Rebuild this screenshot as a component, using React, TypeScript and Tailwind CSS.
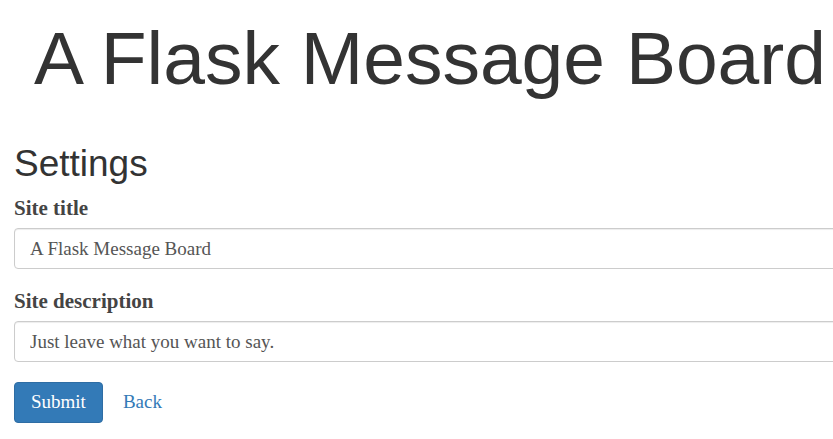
import { type FC } from 'react';

const serif = "font-['Liberation_Serif',Georgia,serif]";

type FieldProps = {
  label: string;
  value: string;
  className?: string;
};

const Field: FC<FieldProps> = ({ label, value, className }) => (
  <div className={`flex flex-col ${className ?? ''}`}>
    <label className={`${serif} text-[21px] leading-[22px] font-bold text-[#444]`}>{label}</label>
    <input
      readOnly
      value={value}
      className={`${serif} mt-[9px] h-[41px] w-full rounded-[4px] border border-[#ccc] bg-white px-[15px] text-[19px] text-[#555] shadow-[inset_0_1px_1px_rgba(0,0,0,0.075)] outline-none`}
    />
  </div>
);

export default function App() {
  return (
    <div className="h-screen w-full overflow-hidden bg-white">
      <div className="w-[860px] px-[14px]">
        <h1 className="mt-[17px] text-center font-['Liberation_Sans',Arial,sans-serif] text-[75px] leading-[83px] text-[#333]">
          A Flask Message Board
        </h1>

        <h2 className="mt-[44px] font-['Liberation_Sans',Arial,sans-serif] text-[37px] leading-[40px] text-[#333]">
          Settings
        </h2>

        <form className="flex flex-col">
          <Field className="mt-[13px]" label="Site title" value="A Flask Message Board" />
          <Field className="mt-[21px]" label="Site description" value="Just leave what you want to say." />

          <div className="mt-[20px] flex items-center gap-[20px]">
            <button
              type="button"
              className={`${serif} h-[41px] rounded-[4px] border border-[#2e6da4] bg-[#337ab7] px-[16px] text-[19px] text-white`}
            >
              Submit
            </button>
            <a href="#" className={`${serif} text-[19px] text-[#337ab7]`}>
              Back
            </a>
          </div>
        </form>
      </div>
    </div>
  );
}
